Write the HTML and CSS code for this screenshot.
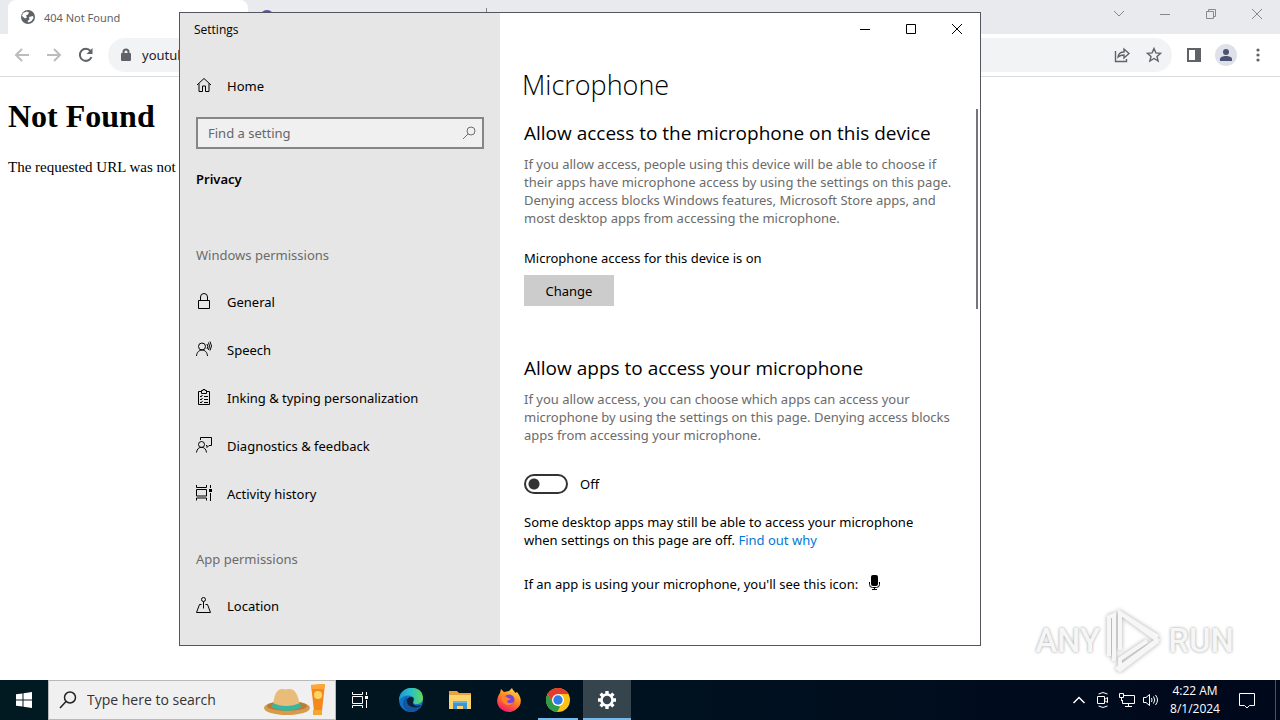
FILE: index.html
```
<!DOCTYPE html>
<html lang="en">

<head>
  <meta charset="UTF-8">
  <meta name="viewport" content="width=device-width, initial-scale=1.0">
  <title>Settings</title>
  <link rel="stylesheet" href="styles.css">
</head>

<body>
  <main class="desktop">
    <!-- browser -->
    <div class="browser">
      <div class="tabStrip">
        <div class="tab active">
          <svg width="16" height="16" viewBox="0 0 16 16"><circle cx="8" cy="8" r="7" fill="#5f6368"/><path d="M3 4l4-1.500 2 1-1 2-2 1 1 2-2 1-3-2.500zM9 8l4-1 .5 2-2 3-3 1.500-1-1.500 2-1.500z" fill="#fff"/></svg>
          <span>404 Not Found</span>
        </div>
        <div class="tab"><i class="favicon"></i></div>
        <i class="tabLine"></i>
        <div class="browserBtns">
          <button aria-label="Search tabs"><svg width="12" height="12"><path d="M1 3l5 5 5-5"/></svg></button>
          <button aria-label="Minimize"><svg width="12" height="12"><path d="M1 6.500h10"/></svg></button>
          <button aria-label="Restore"><svg width="12" height="12"><path d="M1.500 3.500h7v7h-7zM3.500 3.500v-2h7v7h-2"/></svg></button>
          <button aria-label="Close"><svg width="12" height="12"><path d="M1 1l10 10M11 1L1 11"/></svg></button>
        </div>
      </div>
      <div class="toolbar">
        <button aria-label="Back" class="dim"><svg width="16" height="16"><path d="M15 8H2M8 2L2 8l6 6"/></svg></button>
        <button aria-label="Forward" class="dim"><svg width="16" height="16"><path d="M1 8h13M8 2l6 6-6 6"/></svg></button>
        <button aria-label="Reload"><svg width="16" height="16"><path d="M13.500 10A6 6 0 1 1 12.500 4" /><path d="M14.500 1v6h-6z" class="solid"/></svg></button>
        <div class="omnibox">
          <svg width="12" height="14"><path d="M3.500 6V4a2.500 2.500 0 0 1 5 0v2" /><rect x="1" y="5" width="10" height="8" rx="1" class="solid"/></svg>
          <input type="text" aria-label="Address" value="youtube.com">
          <button aria-label="Share"><svg width="16" height="16"><path class="thin" d="M1.500 4v10.500h11V12M4 10c.5-4 3-5 6-5V2l5 4.500L10 11V8c-2.500 0-4 .3-6 2z"/></svg></button>
          <button aria-label="Bookmark"><svg width="16" height="16"><path class="thin" d="M8 1.500l1.900 4.400 4.700.4-3.600 3.100 1.100 4.600L8 11.500 3.900 14 5 9.400 1.400 6.300l4.700-.4z"/></svg></button>
        </div>
        <button aria-label="Side panel"><svg width="16" height="16"><path d="M2 2h12v12H2z"/><path d="M9 1h6v14H9z" class="solid"/></svg></button>
        <button aria-label="Profile" class="profile"><svg width="16" height="16"><circle cx="8" cy="5" r="3" class="solid"/><path d="M2 14v-2c0-4 12-4 12 0v2z" class="solid"/></svg></button>
        <button aria-label="Menu"><svg width="16" height="16"><g class="solid"><circle cx="8" cy="3" r="1.600"/><circle cx="8" cy="8" r="1.600"/><circle cx="8" cy="13" r="1.600"/></g></svg></button>
      </div>
      <div class="page">
        <h1>Not Found</h1>
        <p>The requested URL was not</p>
      </div>
    </div>

    <div class="watermark">
      <span>ANY</span>
      <svg width="60" height="66" viewBox="0 0 60 66"><path d="M5 48V9l5-2v46M16 42V5l37 27-37 27v-8l27-18M16 5l38 24M12 59l4 3 38-29"/></svg>
      <span>RUN</span>
    </div>

    <!-- settings window -->
    <section class="settings">
      <nav class="sidebar">
        <div class="winTitle">Settings</div>
        <a class="item home" href="#"><svg width="16" height="16"><path d="M1 8l7-6.500L15 8M3 6.500v8h3.500V9h3v5.500H13v-8"/></svg>Home</a>
        <div class="search">
          <input type="text" placeholder="Find a setting" aria-label="Find a setting">
          <svg width="14" height="14"><circle cx="9" cy="5" r="4"/><path d="M6 8l-5 5"/></svg>
        </div>
        <h2 class="category">Privacy</h2>
        <h3 class="group first">Windows permissions</h3>
        <a class="item" href="#"><svg width="16" height="16"><path d="M2.500 7.500h11v8h-11zM4.500 7.500V4a3.500 3.500 0 0 1 7 0v3.500"/></svg>General</a>
        <a class="item" href="#"><svg width="16" height="16"><circle cx="6" cy="5.500" r="3.500"/><path d="M.5 15c.5-8 10.500-8 11 0M11 3q1.500 2.500 0 5M12.500 1.500q2 3.500 0 7.500M14 .5q3 4.500 0 9"/></svg>Speech</a>
        <a class="item" href="#"><svg width="16" height="16"><path d="M5.500 2.500h-3v13h11v-13h-3M5.500 4.500v-3h1.500V.5h2v1h1.500v3zM8 7.500h4M8 10.500h4M8 13.500h4M4 7l1 1 1.500-2M4 10l1 1 1.500-2M4 13l1 1 1.500-2"/></svg>Inking &amp; typing personalization</a>
        <a class="item" href="#"><svg width="16" height="16"><circle cx="5.500" cy="7.500" r="3"/><path d="M.5 15.500c.5-7 9.500-7 10 0M4.500 3V.5h11v8h-2.500l-2 2v-2H10"/></svg>Diagnostics &amp; feedback</a>
        <a class="item" href="#"><svg width="16" height="16"><path d="M.5 0v2.500h10V0M.5 15.500v-2.500h10v2.500M.5 4.500h10v6.500H.5zM14.500 0v3M14.500 8v8"/><path d="M13 4h3v3h-3z" fill="#000" stroke="none"/></svg>Activity history</a>
        <h3 class="group">App permissions</h3>
        <a class="item" href="#"><svg width="16" height="16"><circle cx="7.500" cy="2.500" r="2"/><path d="M7.500 4.500v7M5.500 7.500h-2l-3 8h14l-3-8h-2"/></svg>Location</a>
      </nav>

      <div class="content">
        <div class="winBtns">
          <button aria-label="Minimize"><svg width="12" height="12"><path d="M1 6.500h10"/></svg></button>
          <button aria-label="Maximize"><svg width="12" height="12"><path d="M1.500 1.500h9v9h-9z"/></svg></button>
          <button aria-label="Close"><svg width="12" height="12"><path d="M1 1l10 10M11 1L1 11"/></svg></button>
        </div>
        <h1>Microphone</h1>
        <div class="scroll">
          <h2>Allow access to the microphone on this device</h2>
          <p class="desc">If you allow access, people using this device will be able to choose if their apps have microphone access by using the settings on this page. Denying access blocks Windows features, Microsoft Store apps, and most desktop apps from accessing the microphone.</p>
          <p class="status">Microphone access for this device is on</p>
          <button class="change">Change</button>

          <h2 class="second">Allow apps to access your microphone</h2>
          <p class="desc">If you allow access, you can choose which apps can access your microphone by using the settings on this page. Denying access blocks apps from accessing your microphone.</p>
          <label class="toggle"><input type="checkbox" role="switch">Off</label>
          <p class="note">Some desktop apps may still be able to access your microphone when settings on this page are off. <a href="#">Find out why</a></p>
          <p class="hint">If an app is using your microphone, you'll see this icon:
            <svg width="12" height="16"><rect x="3" y="0" width="7" height="11" rx="2" fill="#000"/><path d="M1.500 7v2.500q0 3 3 3h4q3 0 3-3V7M6.500 12v3M4 14.500h5" fill="none" stroke="#000"/></svg>
          </p>
          <i class="thumb"></i>
        </div>
      </div>
    </section>
  </main>

  <footer class="taskbar">
    <button class="start" aria-label="Start"><svg width="16" height="16" fill="#fff"><path d="M0 2.300L6.500 1.400v6.100H0zM7.500 1.200L16 0v7.500H7.500zM0 8.500h6.500v6.100L0 13.700zM7.500 8.500H16V16l-8.500-1.200z"/></svg></button>
    <div class="taskSearch">
      <svg class="glass" width="18" height="18"><circle cx="11" cy="6.500" r="5.500"/><path d="M7 10.500L1 17"/></svg>
      <input type="text" placeholder="Type here to search" aria-label="Type here to search">
      <svg width="64" height="36" viewBox="0 0 64 36">
        <path d="M48 3l14-1-3 27h-8z" fill="#f4881c"/><path d="M48 3l14-1-.6 5H48.600z" fill="#ffa733"/><circle cx="55" cy="13" r="4" fill="#ffd467"/><path d="M50 28h9v5h-9z" fill="#f7a62d"/>
        <ellipse cx="24" cy="26" rx="23" ry="7" fill="#d89b4e"/><ellipse cx="24" cy="24" rx="20" ry="5" fill="#b97c35"/>
        <path d="M10 24c1-12 4-17 9-17 3 0 4 1 6 0 7-1 10 5 12 17-7 5-20 5-27 0z" fill="#e9bd79"/>
        <path d="M10 21c8 4 18 4 27 0l1 4c-8 5-20 5-29 0z" fill="#36b7a4"/>
      </svg>
    </div>
    <button class="app taskView" aria-label="Task View"><svg width="18" height="16" fill="none" stroke="#fff"><path d="M1.500 0v2.500h10V0M1.500 16v-2.500h10V16M1.500 4.500h10v7h-10zM15.500 0v3M15.500 8v8"/><path d="M14 4h3v3h-3z" fill="#fff" stroke="none"/></svg></button>
    <div class="apps">
      <button class="app" aria-label="Edge"><svg width="24" height="24" viewBox="0 0 24 24">
        <defs><linearGradient id="edgeTop" x1="0" x2="1"><stop offset="0" stop-color="#1997d8"/><stop offset=".5" stop-color="#2cc0c4"/><stop offset="1" stop-color="#62d957"/></linearGradient></defs>
        <circle cx="12" cy="12" r="12" fill="#1272c4"/>
        <path d="M0 12C1-4 24-4 24 10c0 4-3 6-7 6-3 0-3-1-2-3 2-5-8-9-15-1z" fill="url(#edgeTop)"/>
        <path d="M7 14c0-3 3-5 5-5 3 0 3 2 2 4-1 4 3 6 8 4-3 6-15 6-15-3z" fill="#0b1f35"/>
        <path d="M8 9c-7 4-4 14 4 15 5 0 8-3 10-6-6 3-13 1-14-4q-.5-3 0-5z" fill="#1455a2"/></svg></button>
      <button class="app" aria-label="File Explorer"><svg width="22" height="20"><path d="M0 1h8l2 2h12v16H0z" fill="#e8a33d"/><path d="M1 5h21v14H0V5z" fill="#fcd46c"/><path d="M4 11h14v8h-4v-3H8v3H4z" fill="#3d95d8"/><path d="M4 11h14v2H4z" fill="#66b4e8"/></svg></button>
      <button class="app" aria-label="Firefox"><svg width="24" height="24" viewBox="0 0 24 24">
        <defs><linearGradient id="fox" x1=".8" y1="0" x2=".3" y2="1"><stop offset="0" stop-color="#ffe14a"/><stop offset=".45" stop-color="#ff8a1e"/><stop offset="1" stop-color="#f5156c"/></linearGradient></defs>
        <path d="M3 5l1-4 3 3 5-1 3-3c1 3 3 3 3 5l2-1c10 12-2 20-8 20C3 24-4 15 3 5z" fill="url(#fox)"/><circle cx="12" cy="12" r="5.500" fill="#7542e5"/><path d="M4 9c3-2 5-1 7 1l3 1-4 2c1 3 5 3 7 0-1 6-11 7-13-4z" fill="#ff8226"/></svg></button>
      <button class="app open" aria-label="Chrome"><svg width="24" height="24" viewBox="0 0 24 24"><circle cx="12" cy="12" r="12" fill="#fbc116"/><path d="M1.600 6A12 12 0 0 1 22.400 6H12L6.800 15z" fill="#e33b2e"/><path d="M1.600 6l5.200 9L12 18l2 1-3 5A12 12 0 0 1 1.600 6z" fill="#2a9d4b"/><circle cx="12" cy="12" r="6" fill="#fff"/><circle cx="12" cy="12" r="4.700" fill="#2f7de9"/></svg></button>
      <button class="app current" aria-label="Settings"><svg width="20" height="20" viewBox="-10 -10 20 20"><circle r="5.500" fill="none" stroke="#fff" stroke-width="2.600"/><path d="M0-9V-6M0 6v3M-9 0H-6M6 0h3M-6.400-6.400l2.100 2.100M4.300 4.300l2.100 2.100M-6.400 6.400l2.100-2.100M4.300-4.300l2.100-2.100" stroke="#fff" stroke-width="3.400"/></svg></button>
    </div>
    <div class="tray">
      <button aria-label="Show hidden icons"><svg width="16" height="16"><path d="M2.500 11L8 5.500l5.500 5.500" stroke-width="1.500"/></svg></button>
      <button aria-label="Camera"><svg width="16" height="16"><path d="M2.500 4.500h7v7h-7zM9.500 7.500l3-2v5l-3-2M3.500 2q4.500-3 9 0M3.500 14q4.500 3 9 0"/></svg></button>
      <button aria-label="Network"><svg width="18" height="16"><path d="M6 3.500h10.500v8h-12V8M10.500 11.500v3M7 14.500h7M1.500 1.500h4v4h-4zM3.500 5.500V9"/></svg></button>
      <button aria-label="Volume"><svg width="18" height="16"><path d="M1.500 5.500H4l3.500-3v11L4 10.500H1.500zM9.500 6q1 2 0 4M11.500 4.500q2.500 3.500 0 7M13.500 3q4 5 0 10"/></svg></button>
      <div class="clock"><div>4:22 AM</div><div>8/1/2024</div></div>
      <button class="notice" aria-label="Notifications"><svg width="18" height="18"><path d="M1.500 2.500h15v12h-5l-2.500 2.500-2.500-2.500h-5z"/></svg></button>
      <i class="peek"></i>
    </div>
  </footer>
</body>

</html>
```
FILE: styles.css
```
* {
  margin: 0;
  padding: 0;
  box-sizing: border-box;
}
body {
  display: flex;
  flex-direction: column;
  min-height: 100vh;
  font: 14px/18px "Open Sans", "Noto Sans", sans-serif;
  color: #000;
  background: #fff;
}
button {
  display: flex;
  align-items: center;
  justify-content: center;
  border: 0;
  background: none;
  font: inherit;
}
input {
  min-width: 0;
  border: 0;
  outline: 0;
  background: none;
  font: inherit;
}
a {
  color: #0078d7;
  text-decoration: none;
}
svg {
  flex: none;
}
.desktop {
  position: relative;
  flex: 1;
}

/* browser */
.tabStrip {
  display: flex;
  height: 34px;
  padding-left: 8px;
  background: #e8eaed;
}
.tab {
  display: flex;
  align-items: center;
  gap: 8px;
  width: 238px;
  padding-left: 12px;
  font: 11px "Noto Sans", sans-serif;
  color: #5f6368;
}
.tab.active {
  width: 240px;
  background: #fff;
  border-radius: 8px 8px 0 0;
}
.favicon {
  width: 14px;
  height: 14px;
  border-radius: 7px;
  background: #4a54b8;
}
.tabLine {
  height: 18px;
  margin-top: 8px;
  border-left: 1px solid #80868b;
}
.browserBtns {
  display: flex;
  margin-left: auto;
}
.browserBtns button {
  width: 46px;
  height: 28px;
}
.browserBtns svg {
  fill: none;
  stroke: #85888c;
}
.toolbar {
  display: flex;
  align-items: center;
  height: 43px;
  padding: 0 6px;
  border-bottom: 1px solid #dadce0;
}
.toolbar button {
  width: 32px;
  height: 32px;
}
.toolbar svg {
  fill: none;
  stroke: #5f6368;
  stroke-width: 2px;
}
.toolbar .dim svg {
  stroke: #babcbe;
}
.toolbar .solid {
  fill: #5f6368;
  stroke: none;
}
.toolbar .thin {
  stroke-width: 1.4px;
}
.omnibox {
  display: flex;
  flex: 1;
  align-items: center;
  height: 34px;
  margin: 0 6px;
  padding: 0 2px 0 12px;
  border-radius: 17px;
  background: #f1f3f4;
}
.omnibox input {
  flex: 1;
  margin-left: 10px;
  font: 13px "Noto Sans", sans-serif;
  color: #202124;
}
.toolbar .profile {
  width: 22px;
  height: 22px;
  margin: 0 5px;
  border-radius: 11px;
  background: #dee1e9;
}
.toolbar .profile .solid {
  fill: #4c5271;
}
.page {
  padding: 20px 8px;
  font: 15px/18px "Liberation Serif", serif;
}
.page h1 {
  margin-bottom: 22px;
  font-size: 32px;
  line-height: 39px;
}

/* settings window */
.settings {
  position: absolute;
  top: 12px;
  right: 299px;
  bottom: 34px;
  left: 179px;
  display: flex;
  border: 1px solid #55555f;
  font: 13px/18px "Noto Sans", sans-serif;
  background: #fff;
  overflow: hidden;
}
.sidebar {
  flex: none;
  width: 320px;
  padding: 0 16px;
  background: #e6e6e6;
}
.winTitle {
  height: 34px;
  margin-left: -2px;
  font: 12px/34px "Open Sans", sans-serif;
}
.item {
  display: flex;
  align-items: center;
  gap: 15px;
  height: 48px;
  color: #000;
}
.item svg {
  margin-bottom: 2px;
  fill: none;
  stroke: #000;
}
.home {
  margin-top: 15px;
}
.search {
  display: flex;
  align-items: center;
  height: 32px;
  margin-top: 7px;
  padding: 0 6px 0 10px;
  border: 2px solid #868686;
  background: #f0f0f0;
}
.search input {
  flex: 1;
}
.search svg {
  fill: none;
  stroke: #6e6e6e;
}
::placeholder {
  color: #666;
  opacity: 1;
}
.category {
  margin-top: 20px;
  font-size: 13px;
  font-weight: 600;
  line-height: 20px;
}
.group {
  margin: 31px 0 13px;
  font-size: 13px;
  font-weight: 400;
  line-height: 20px;
  color: #6b6b6b;
}
.group.first {
  margin-top: 56px;
}
.content {
  display: flex;
  flex: 1;
  flex-direction: column;
}
.winBtns {
  display: flex;
  justify-content: flex-end;
}
.winBtns button {
  width: 46px;
  height: 32px;
}
.winBtns svg {
  fill: none;
  stroke: #000;
}
.content h1 {
  margin: 22px 22px 6px;
  font: 300 27px/36px "Open Sans", sans-serif;
}
.scroll {
  position: relative;
  flex: 1;
  padding: 10px 20px 0 24px;
}
.content h2 {
  margin-bottom: 8px;
  font: 19px/28px "Open Sans", sans-serif;
}
.content .second {
  margin-top: 48px;
}
.desc {
  color: #6b6b6b;
}
.status {
  margin: 22px 0 8px;
}
.change {
  width: 90px;
  height: 31px;
  background: #ccc;
}
.toggle {
  display: flex;
  align-items: center;
  gap: 12px;
  width: max-content;
  margin: 30px 0 19px;
}
.toggle input {
  appearance: none;
  width: 44px;
  height: 20px;
  border: 2px solid #333;
  border-radius: 10px;
  background: radial-gradient(circle at 8px 8px, #333 5px, transparent 6px);
}
.note {
  padding-right: 24px;
}
.hint {
  display: flex;
  gap: 10px;
  margin-top: 26px;
}
.thumb {
  position: absolute;
  top: 0;
  right: 2px;
  width: 2px;
  height: 200px;
  background: #767676;
}

.watermark {
  position: absolute;
  right: 46px;
  bottom: 6px;
  display: flex;
  align-items: center;
  gap: 4px;
  font: 500 33px/66px Roboto, sans-serif;
  color: #f6f6f6;
  text-shadow: 0 0 3px #999;
}
.watermark svg {
  fill: none;
  stroke: #f6f6f6;
  stroke-width: 4px;
  filter: drop-shadow(0 0 2px #aaa);
}

/* taskbar */
.taskbar {
  display: flex;
  height: 40px;
  color: #fff;
  background: linear-gradient(90deg, #001a22, #00101f 60%, #00081c);
}
.start {
  width: 48px;
}
.taskSearch {
  display: flex;
  align-items: center;
  width: 288px;
  padding: 0 8px 0 10px;
  border: 1px solid #b8b8b8;
  background: #f0f0f0;
}
.taskSearch input {
  flex: 1;
  margin-left: 10px;
}
.taskSearch ::placeholder {
  color: #333;
}
.glass {
  fill: none;
  stroke: #222;
  stroke-width: 1.5px;
}
.apps {
  display: flex;
  gap: 1px;
  margin-left: 3px;
}
.app {
  width: 48px;
}
.open {
  background: linear-gradient(#76b9ed, #76b9ed) 50% 100% / 40px 2px no-repeat;
}
.current {
  background: linear-gradient(#76b9ed, #76b9ed) 50% 100% / 48px 2px no-repeat #36444d;
}
.tray {
  display: flex;
  margin-left: auto;
}
.tray svg {
  fill: none;
  stroke: #fff;
}
.tray button {
  width: 24px;
}
.clock {
  width: 64px;
  padding-top: 2px;
  font-size: 12px;
  text-align: center;
}
.tray .notice {
  width: 40px;
}
.peek {
  width: 5px;
  margin-left: 8px;
  border-left: 1px solid #4b535f;
}
```
